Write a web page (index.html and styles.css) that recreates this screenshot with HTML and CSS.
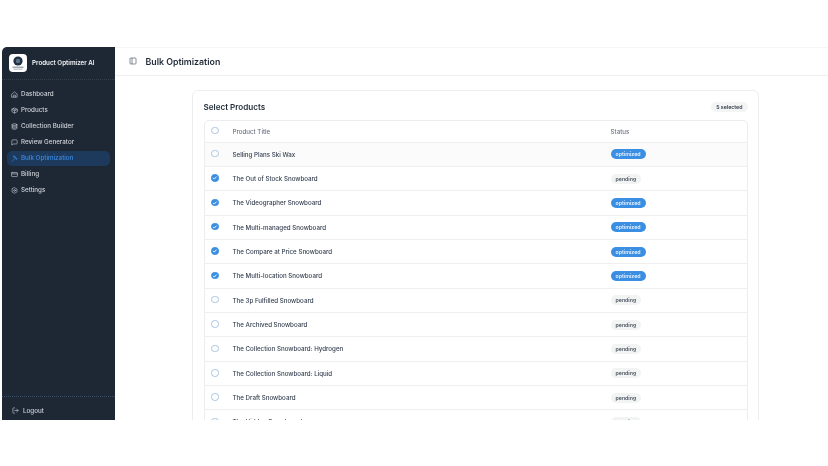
FILE: index.html
```html
<!DOCTYPE html>
<html lang="en">
<head>
<meta charset="utf-8">
<title>Bulk Optimization</title>
<link rel="stylesheet" href="styles.css">
</head>
<body>
<div class="app">
  <aside class="sidebar">
    <div class="brand">
      <div class="logo">
        <svg viewBox="0 0 18 18" width="18" height="18"><circle cx="9" cy="7" r="4.6" fill="#1f2f44"/><circle cx="9" cy="7" r="2.2" fill="#5b7286"/><rect x="3.5" y="12.6" width="11" height="1.2" fill="#8a949e"/><rect x="4.5" y="14.6" width="9" height="1" fill="#a8b0b8"/></svg>
      </div>
      <span class="brand-name">Product Optimizer AI</span>
    </div>
    <nav class="nav">
      <a class="nav-item"><svg class="ico" viewBox="0 0 24 24"><path d="M3 10.5 12 3l9 7.5V21H3z"/><path d="M9 21v-7h6v7"/></svg>Dashboard</a>
      <a class="nav-item"><svg class="ico" viewBox="0 0 24 24"><path d="M21 8 12 3 3 8v8l9 5 9-5z"/><path d="M3 8l9 5 9-5M12 13v8M7.5 5.5l9 5"/></svg>Products</a>
      <a class="nav-item"><svg class="ico" viewBox="0 0 24 24"><ellipse cx="12" cy="5.5" rx="8" ry="3"/><path d="M4 5.5v13c0 1.7 3.6 3 8 3s8-1.3 8-3v-13M4 10c0 1.7 3.6 3 8 3s8-1.300 8-3M4 14.500c0 1.700 3.600 3 8 3s8-1.300 8-3"/></svg>Collection Builder</a>
      <a class="nav-item"><svg class="ico" viewBox="0 0 24 24"><path d="M21 15a2 2 0 0 1-2 2H7l-4 4V5a2 2 0 0 1 2-2h14a2 2 0 0 1 2 2z"/></svg>Review Generator</a>
      <a class="nav-item active"><svg class="ico" viewBox="0 0 24 24"><path d="M4 21 14 11M14 5v4M12 7h4M19 11v4M17 13h4M9 3v3M7.500 4.500h3"/><path d="m12 9 3 3"/></svg>Bulk Optimization</a>
      <a class="nav-item"><svg class="ico" viewBox="0 0 24 24"><rect x="2" y="5" width="20" height="14" rx="2"/><path d="M2 10h20"/></svg>Billing</a>
      <a class="nav-item"><svg class="ico" viewBox="0 0 24 24"><path d="M12 2.500 20.500 7.300v9.400L12 21.500l-8.500-4.800V7.300z"/><circle cx="12" cy="12" r="3"/></svg>Settings</a>
    </nav>
    <div class="side-foot">
      <a class="logout"><svg class="ico" viewBox="0 0 24 24"><path d="M9 21H5a2 2 0 0 1-2-2V5a2 2 0 0 1 2-2h4M16 17l5-5-5-5M21 12H9"/></svg>Logout</a>
    </div>
  </aside>
  <main class="main">
    <header class="topbar">
      <svg class="panel-ico" viewBox="0 0 24 24"><rect x="3" y="3" width="18" height="18" rx="2"/><path d="M9 3v18"/></svg>
      <h1 class="page-title">Bulk Optimization</h1>
    </header>
    <section class="content">
      <div class="card">
        <div class="card-head">
          <h2 class="card-title">Select Products</h2>
          <span class="badge count">5 selected</span>
        </div>
        <div class="table">
          <div class="row head"><span class="radio"></span><span>Product Title</span><span>Status</span></div>
          <div class="row hover"><span class="radio"></span><span class="name">Selling Plans Ski Wax</span><span><span class="badge opt">optimized</span></span></div>
          <div class="row"><span class="radio on"><svg viewBox="0 0 8 8"><path d="M2.200 4.100 3.500 5.400 5.900 2.800"/></svg></span><span class="name">The Out of Stock Snowboard</span><span><span class="badge pend">pending</span></span></div>
          <div class="row"><span class="radio on"><svg viewBox="0 0 8 8"><path d="M2.200 4.100 3.500 5.400 5.900 2.800"/></svg></span><span class="name">The Videographer Snowboard</span><span><span class="badge opt">optimized</span></span></div>
          <div class="row"><span class="radio on"><svg viewBox="0 0 8 8"><path d="M2.200 4.100 3.500 5.400 5.900 2.800"/></svg></span><span class="name">The Multi-managed Snowboard</span><span><span class="badge opt">optimized</span></span></div>
          <div class="row"><span class="radio on"><svg viewBox="0 0 8 8"><path d="M2.200 4.100 3.500 5.400 5.900 2.800"/></svg></span><span class="name">The Compare at Price Snowboard</span><span><span class="badge opt">optimized</span></span></div>
          <div class="row"><span class="radio on"><svg viewBox="0 0 8 8"><path d="M2.200 4.100 3.500 5.400 5.900 2.800"/></svg></span><span class="name">The Multi-location Snowboard</span><span><span class="badge opt">optimized</span></span></div>
          <div class="row"><span class="radio"></span><span class="name">The 3p Fulfilled Snowboard</span><span><span class="badge pend">pending</span></span></div>
          <div class="row"><span class="radio"></span><span class="name">The Archived Snowboard</span><span><span class="badge pend">pending</span></span></div>
          <div class="row"><span class="radio"></span><span class="name">The Collection Snowboard: Hydrogen</span><span><span class="badge pend">pending</span></span></div>
          <div class="row"><span class="radio"></span><span class="name">The Collection Snowboard: Liquid</span><span><span class="badge pend">pending</span></span></div>
          <div class="row"><span class="radio"></span><span class="name">The Draft Snowboard</span><span><span class="badge pend">pending</span></span></div>
          <div class="row"><span class="radio"></span><span class="name">The Hidden Snowboard</span><span><span class="badge pend">pending</span></span></div>
        </div>
      </div>
    </section>
  </main>
</div>
</body>
</html>
```

FILE: styles.css
```css
* { box-sizing: border-box; }
html, body { margin: 0; padding: 0; background: #fff; }
body {
  width: 828px;
  height: 466px;
  overflow: hidden;
  padding: 47px 0 0 2px;
  font-family: Inter, "Liberation Sans", sans-serif;
  color: #1f2937;
}
.app { display: flex; height: 373px; overflow: hidden; filter: blur(0.25px); }
.sidebar {
  width: 113px;
  flex: none;
  display: flex;
  flex-direction: column;
  background: #1e2835;
  border-top-left-radius: 5px;
  color: #cfd4da;
}
.brand {
  height: 32.500px;
  display: flex;
  align-items: center;
  gap: 5px;
  padding: 0 0 0 7px;
  border-bottom: 1px dotted #33414f;
  flex: none;
}
.logo { width: 18px; height: 18px; background: #fff; border-radius: 4px; flex: none; overflow: hidden; }
.logo svg { display: block; }
.brand-name { font-size: 6.250px; font-weight: 600; color: #f1f3f5; white-space: nowrap; padding-top: 1px; }
.nav { display: flex; flex-direction: column; gap: 1px; padding: 7px 5px 0; flex: 1; }
.nav-item {
  height: 15px;
  display: flex;
  align-items: center;
  gap: 3px;
  padding: 0 0 0 4px;
  border-radius: 5px;
  font-size: 6.250px;
  font-weight: 500;
  white-space: nowrap;
}
.nav-item.active { background: #1d3a5c; color: #3d8ae6; }
.ico {
  width: 7px;
  height: 7px;
  flex: none;
  fill: none;
  stroke: currentColor;
  stroke-width: 2;
  stroke-linecap: round;
  stroke-linejoin: round;
}
.side-foot { height: 24px; border-top: 1px dotted #3a5068; padding: 9.500px 0 0 10px; flex: none; }
.logout { display: flex; align-items: center; gap: 4px; font-size: 6.250px; font-weight: 500; }
.main { flex: 1; min-width: 0; display: flex; flex-direction: column; }
.topbar {
  height: 29px;
  flex: none;
  display: flex;
  align-items: center;
  gap: 9px;
  padding: 0 0 1px 13.500px;
  border-top: 1px solid #f5f5f5;
  border-bottom: 1px solid #efefef;
}
.panel-ico { width: 8px; height: 8px; fill: none; stroke: #4b5563; stroke-width: 2; flex: none; }
.page-title { margin: 0; font-size: 8.800px; font-weight: 600; color: #1f2937; }
.content { flex: 1; padding: 13.500px 69px 0 77px; overflow: hidden; }
.card {
  border: 1px solid #ededed;
  border-radius: 6px;
  padding: 0 10.500px;
  height: 400px;
}
.card-head { height: 29px; padding-top: 3.500px; display: flex; align-items: center; justify-content: space-between; }
.card-title { margin: 0; font-size: 8.100px; font-weight: 600; color: #1f2937; }
.badge {
  display: inline-flex;
  align-items: center;
  height: 10px;
  padding: 0 5px;
  border-radius: 5px;
  font-size: 5.250px;
  font-weight: 600;
  white-space: nowrap;
}
.count { background: #f3f4f4; color: #374151; }
.opt { background: #3b8fe3; color: #e8f2fc; }
.pend { background: #f2f3f3; color: #4b5563; }
.table { border: 1px solid #ededed; border-bottom: 0; border-radius: 5px 5px 0 0; }
.row {
  display: grid;
  grid-template-columns: 21.500px 378px 1fr;
  align-items: center;
  height: 24.350px;
  border-bottom: 1px solid #efefef;
  font-size: 6.200px;
  padding-left: 6.500px;
}
.row.head { height: 22px; color: #6b7280; font-weight: 500; }
.row.hover { background: #fbfbfb; }
.name { color: #374151; font-weight: 500; white-space: nowrap; }
.radio {
  width: 7.500px;
  height: 7.500px;
  border-radius: 50%;
  border: 1px solid #a8c4e0;
  background: #fff;
  display: block;
  margin-top: -1px;
}
.radio.on { background: #3b8fe3; border-color: #3b8fe3; position: relative; }
.radio svg {
  position: absolute;
  inset: -1px;
  width: 7.500px;
  height: 7.500px;
  fill: none;
  stroke: #fff;
  stroke-width: 1;
}
```
